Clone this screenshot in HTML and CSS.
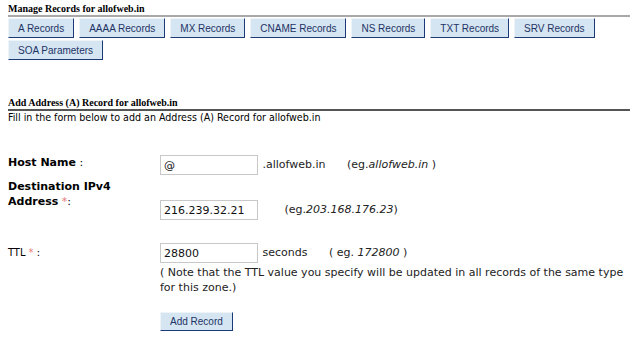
FILE: index.html
```html
<!DOCTYPE html>
<html lang="en">
<head>
    <meta charset="UTF-8">
    <title>Manage Records</title>
    <link rel="stylesheet" href="styles.css">
</head>
<body>

    <!-- Record type tabs -->
    <div class="section">
        <h4 class="section-title">Manage Records for allofweb.in</h4>
        <div class="tabs">
            <button class="btn">A Records</button>
            <button class="btn">AAAA Records</button>
            <button class="btn">MX Records</button>
            <button class="btn">CNAME Records</button>
            <button class="btn">NS Records</button>
            <button class="btn">TXT Records</button>
            <button class="btn">SRV Records</button>
            <button class="btn">SOA Parameters</button>
        </div>
    </div>

    <!-- Add A record form -->
    <div class="section add-section">
        <h4 class="section-title dark">Add Address (A) Record for allofweb.in</h4>
        <p class="intro">Fill in the form below to add an Address (A) Record for allofweb.in</p>

        <div class="form">
            <div class="row host-row">
                <label class="label"><b>Host Name</b> :</label>
                <div class="field">
                    <input type="text" class="input" value="@">
                    <span class="suffix">.allofweb.in</span>
                    <span class="hint">(eg.<i>allofweb.in</i> )</span>
                </div>
            </div>

            <div class="row ip-row">
                <label class="label"><b>Destination IPv4<br>Address</b> <span class="req">*</span>:</label>
                <div class="field">
                    <input type="text" class="input" value="216.239.32.21">
                    <span class="hint ip-hint">(eg.<i>203.168.176.23</i>)</span>
                </div>
            </div>

            <div class="row ttl-row">
                <label class="label">TTL <span class="req">*</span> :</label>
                <div class="field">
                    <input type="text" class="input" value="28800">
                    <span class="suffix">seconds</span>
                    <span class="hint ttl-hint">( eg. <i>172800</i> )</span>
                    <p class="note">( Note that the TTL value you specify will be updated in all records of the same type for this zone.)</p>
                </div>
            </div>

            <div class="row submit-row">
                <div class="label"></div>
                <div class="field">
                    <button class="btn">Add Record</button>
                </div>
            </div>
        </div>
    </div>

</body>
</html>
```

FILE: styles.css
```css
body {
    margin: 0;
    padding: 0 8px;
    background: #fff;
    color: #000;
    font-family: 'DejaVu Sans', Verdana, sans-serif;
    font-size: 11px;
}

.section-title {
    font-family: 'Liberation Serif', 'Times New Roman', serif;
    font-size: 10px;
    font-weight: bold;
    margin: 0 2px 0 0;
    padding: 3px 0 1px;
    border-bottom: 2px solid #a8a8a8;
}

.section-title.dark {
    border-bottom-color: #555;
}

/* Tabs */
.tabs {
    display: flex;
    flex-wrap: wrap;
    gap: 2px 5px;
    margin-top: 1px;
    width: 600px;
}

.btn {
    font-family: 'Liberation Sans', Tahoma, sans-serif;
    font-size: 10px;
    color: #1d3466;
    background: #d5e5f1;
    border: 1px solid;
    border-color: #eef4f8 #1c3a78 #1c3a78 #eef4f8;
    height: 20px;
    padding: 0 9px;
    cursor: pointer;
}

/* Add form */
.add-section {
    margin-top: 34px;
}

.intro {
    margin: 0;
    font-family: 'DejaVu Sans Condensed', 'DejaVu Sans', sans-serif;
    font-size: 10.6px;
    line-height: 12px;
}

.form {
    margin-top: 32px;
}

.row {
    display: flex;
}

.label {
    width: 152px;
    flex-shrink: 0;
    line-height: 15px;
}

.field {
    flex: 1;
}

.input {
    width: 98px;
    height: 20px;
    box-sizing: border-box;
    border: 1px solid #c8c8c8;
    padding: 1px 3px;
    font-family: 'DejaVu Sans', Verdana, sans-serif;
    font-size: 11px;
    color: #111;
    vertical-align: middle;
}

.suffix {
    margin-left: 1px;
    color: #222;
}

.hint {
    margin-left: 18px;
    color: #222;
}

.ip-hint {
    margin-left: 23px;
}

.ttl-hint {
    margin-left: 18px;
}

.req {
    color: #e87a7a;
    font-weight: normal;
}

.ip-row {
    margin-top: 4px;
}

.ip-row .field {
    padding-top: 21px;
}

.ttl-row {
    margin-top: 23px;
}

.ttl-row .label {
    padding-top: 2px;
    font-family: 'DejaVu Sans Condensed', 'DejaVu Sans', sans-serif;
}

.note {
    margin: 2px 0 0;
    line-height: 15px;
    color: #222;
}

.submit-row {
    margin-top: 17px;
}

.submit-row .btn {
    height: 19px;
    padding: 0 9px;
}
```
